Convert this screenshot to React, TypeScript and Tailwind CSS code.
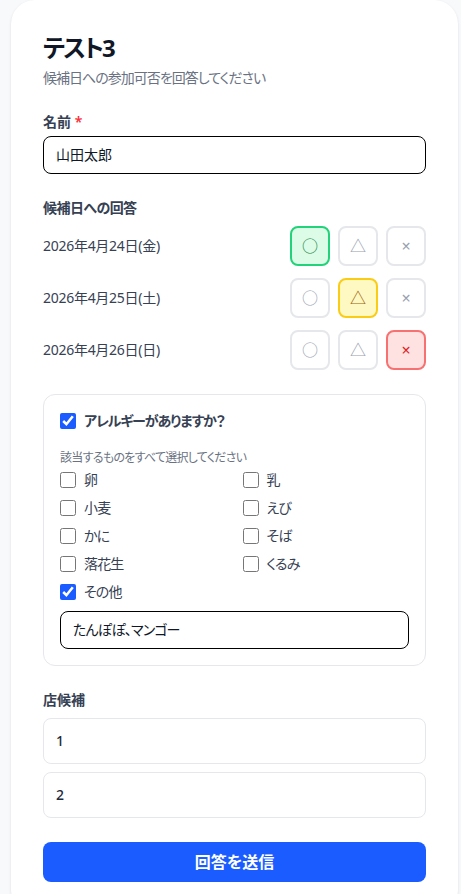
import { useState } from "react";

type Answer = "yes" | "maybe" | "no";

const dates: { label: string; answer: Answer }[] = [
  { label: "2026年4月24日(金)", answer: "yes" },
  { label: "2026年4月25日(土)", answer: "maybe" },
  { label: "2026年4月26日(日)", answer: "no" },
];

const allergens = ["卵", "乳", "小麦", "えび", "かに", "そば", "落花生", "くるみ"];

function AnswerButtons({ value, onChange }: { value: Answer; onChange: (a: Answer) => void }) {
  return (
    <div className="flex gap-2">
      <button
        onClick={() => onChange("yes")}
        className={
          value === "yes"
            ? "w-10 h-10 rounded-lg border-2 border-[#22d37a] bg-[#dcfce7] text-[#15803d] text-base"
            : "w-10 h-10 rounded-lg border-2 border-gray-200 bg-white text-gray-400 text-base"
        }
      >
        ○
      </button>
      <button
        onClick={() => onChange("maybe")}
        className={
          value === "maybe"
            ? "w-10 h-10 rounded-lg border-2 border-[#facc15] bg-[#fef9c3] text-[#a16207] text-base"
            : "w-10 h-10 rounded-lg border-2 border-gray-200 bg-white text-gray-400 text-base"
        }
      >
        △
      </button>
      <button
        onClick={() => onChange("no")}
        className={
          value === "no"
            ? "w-10 h-10 rounded-lg border-2 border-[#f87171] bg-[#fee2e2] text-[#dc2626] text-base"
            : "w-10 h-10 rounded-lg border-2 border-gray-200 bg-white text-gray-400 text-base"
        }
      >
        ×
      </button>
    </div>
  );
}

export default function App() {
  const [answers, setAnswers] = useState<Answer[]>(dates.map((d) => d.answer));
  const [hasAllergy, setHasAllergy] = useState(true);
  const [other, setOther] = useState(true);

  return (
    <div
      className="min-h-screen bg-[#f8f9fb] pl-[11px] [font-feature-settings:'palt']"
      style={{ fontFamily: '"Noto Sans", "Noto Sans CJK JP", sans-serif' }}
    >
      <div className="w-[447px] bg-white rounded-3xl px-8 pt-8 pb-8 shadow-sm">
        <h1 className="text-2xl font-bold text-gray-900 tracking-[-0.08em]">テスト3</h1>
        <p className="mt-1 text-sm text-gray-500 tracking-[-0.07em]">候補日への参加可否を回答してください</p>

        <div className="mt-6">
          <label className="block text-sm font-semibold text-gray-700 mb-1">
            名前 <span className="text-red-500">*</span>
          </label>
          <input
            defaultValue="山田太郎"
            className="w-full border border-black rounded-lg px-3 py-2 text-sm text-gray-900 outline-none"
          />
        </div>

        <div className="mt-6">
          <p className="text-sm font-semibold text-gray-700 tracking-[-0.04em]">候補日への回答</p>
          <div className="mt-2 flex flex-col gap-3">
            {dates.map((d, i) => (
              <div key={d.label} className="flex items-center justify-between">
                <span className="text-sm text-gray-700 tracking-[-0.02em]">{d.label}</span>
                <AnswerButtons
                  value={answers[i]}
                  onChange={(a) => setAnswers(answers.map((x, j) => (j === i ? a : x)))}
                />
              </div>
            ))}
          </div>
        </div>

        <div className="mt-6 border border-gray-200 rounded-xl p-4">
          <label className="flex items-center gap-2 text-sm font-semibold text-gray-700 tracking-[-0.08em]">
            <input
              type="checkbox"
              checked={hasAllergy}
              onChange={(e) => setHasAllergy(e.target.checked)}
              className="w-4 h-4 accent-[#1a5cff]"
            />
            アレルギーがありますか？
          </label>
          <p className="mt-[19px] text-xs text-gray-500 tracking-[-0.06em]">
            該当するものをすべて選択してください
          </p>
          <div className="mt-1 grid grid-cols-2 gap-x-4 gap-y-2">
            {allergens.map((a) => (
              <label key={a} className="flex items-center gap-2 text-sm text-gray-700 tracking-[-0.06em]">
                <input type="checkbox" className="w-4 h-4 accent-[#1a5cff]" />
                {a}
              </label>
            ))}
            <label className="flex items-center gap-2 text-sm text-gray-700 tracking-[-0.06em]">
              <input
                type="checkbox"
                checked={other}
                onChange={(e) => setOther(e.target.checked)}
                className="w-4 h-4 accent-[#1a5cff]"
              />
              その他
            </label>
          </div>
          <input
            defaultValue="たんぽぽ、マンゴー"
            className="mt-[9px] w-full border border-black rounded-lg px-3 py-2 text-sm text-gray-900 outline-none tracking-[-0.06em]"
          />
        </div>

        <div className="mt-6">
          <p className="text-sm font-semibold text-gray-700 mb-2">店候補</p>
          <div className="flex flex-col gap-2">
            <input
              defaultValue="1"
              className="w-full border border-gray-200 rounded-lg px-3 py-3 text-sm font-medium text-gray-800 outline-none"
            />
            <input
              defaultValue="2"
              className="w-full border border-gray-200 rounded-lg px-3 py-3 text-sm font-medium text-gray-800 outline-none"
            />
          </div>
        </div>

        <button className="mt-6 w-full bg-[#1a5cff] text-white text-base font-bold py-2 rounded-lg">
          回答を送信
        </button>
      </div>
    </div>
  );
}
